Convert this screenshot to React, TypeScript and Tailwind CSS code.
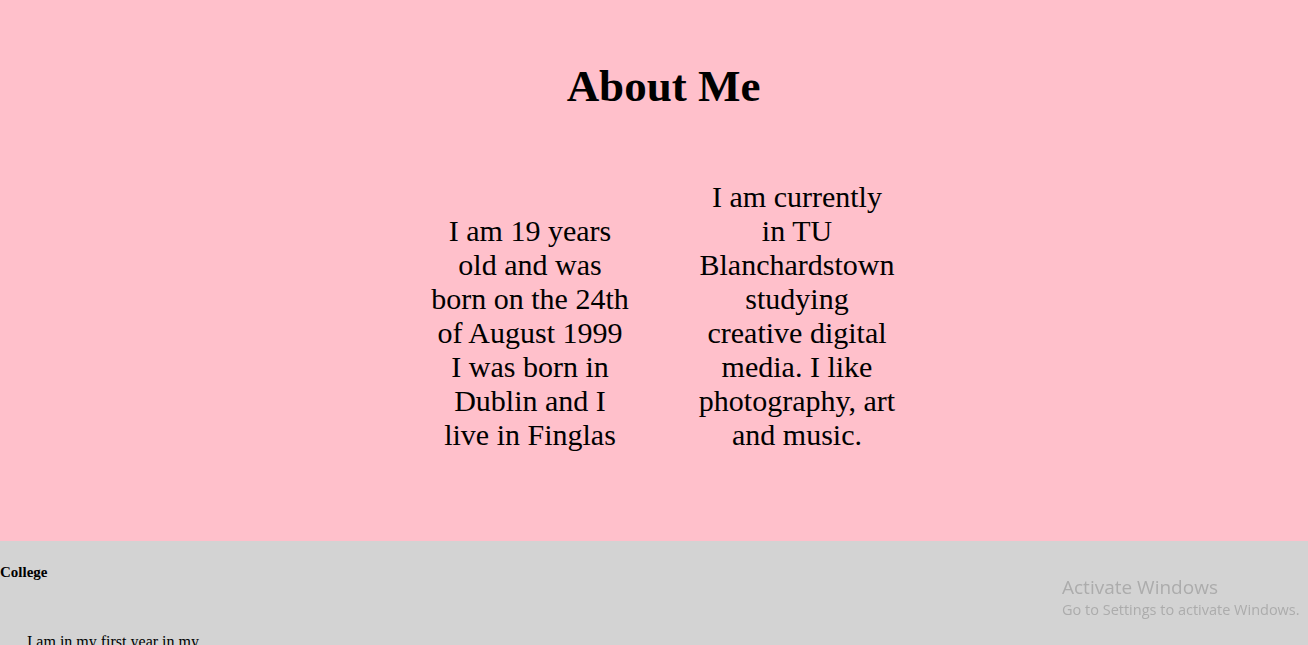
const serif = { fontFamily: '"Liberation Serif", "Times New Roman", serif' };

const App = () => {
  return (
    <div className="min-h-screen bg-[#d3d3d3] text-black" style={serif}>
      <section className="bg-[#ffc0cb] pl-[19px] pt-[60px] pb-[89px]">
        <h1 className="text-center text-[45px] font-bold leading-[52px]">About Me</h1>

        <div className="mt-[68px] flex items-end justify-center gap-[69px] text-center text-[30px] leading-[34px]">
          <p className="w-[198px]">
            I am 19 years old and was born on the 24th of August 1999 I was born in Dublin and I live in Finglas
          </p>
          <p className="w-[198px]">
            I am currently in TU Blanchardstown studying creative digital media. I like photography, art and music.
          </p>
        </div>
      </section>

      <section className="pt-[23px]">
        <h5 className="text-[15px] font-bold leading-[17px]">College</h5>
        <p className="mt-[52px] ml-[27px] w-[180px] text-[16px] leading-[18px]">
          I am in my first year in my course and I am enjoying it so far.
        </p>
      </section>

      <div
        className="fixed left-[1062px] top-[574px] text-[#acacac]"
        style={{ fontFamily: '"Open Sans", "Noto Sans", sans-serif' }}
      >
        <div className="text-[19px] leading-[26px]">Activate Windows</div>
        <div className="text-[14.5px] leading-[19px]">Go to Settings to activate Windows.</div>
      </div>
    </div>
  );
};

export default App;
